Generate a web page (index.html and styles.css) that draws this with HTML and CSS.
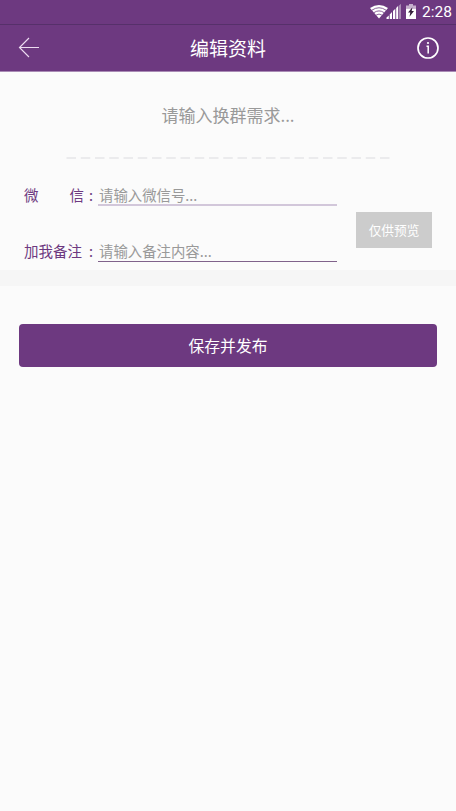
FILE: index.html
```html
<!DOCTYPE html>
<html lang="zh-CN">
<head>
<meta charset="utf-8">
<title>编辑资料</title>
<link rel="stylesheet" href="styles.css">
</head>
<body>
<div class="status">
  <svg class="status-icons" width="48" height="20" viewBox="0 0 48 20">
    <path d="M1 8Q10 2 19 8L10 18.500Z" fill="#fff"/>
    <path d="M2.900 10.200Q10 5.300 17.100 10.200M5 12.600Q10 9.200 15 12.600M7.200 15Q10 13.200 12.800 15" fill="none" stroke="#6d3980" stroke-width=".8"/>
    <path d="M17.500 19v-1.500l2.300-2V19zM20.700 19v-4.600l2.300-2.300V19zM24 19v-7.900l2.300-2.300V19zM27.200 19V7.900l1.800-1.800V19z" fill="#fff"/>
    <path d="M29.500 19V6l2.500-2.200V19z" fill="#a98ab4"/>
    <path d="M40 4h4v1.500h3V8.500h-10V5.500h3z" fill="#c5b0cc"/>
    <path d="M37 8.500h10V19H37z" fill="#fff"/>
    <path d="M43.400 7.200L39 12.600h2.300L40.500 16.800l4.500-5.900h-2.300z" fill="#34203b"/>
  </svg>
  <span class="time">2:28</span>
</div>
<header class="header">
  <svg class="back" width="22" height="22" viewBox="0 0 22 22"><path d="M11 1L1.500 10.500L11 20M1.500 10.500H21" fill="none" stroke="#eddcf1" stroke-width="1.150"/></svg>
  <h1 class="title">编辑资料</h1>
  <svg class="info" width="24" height="24" viewBox="0 0 24 24"><circle cx="12" cy="12" r="10" fill="none" stroke="#fff" stroke-width="1.700"/><circle cx="12" cy="7" r="1.100" fill="#fff"/><path d="M10.500 10.200H12.200V17.500" fill="none" stroke="#fff" stroke-width="1.500"/></svg>
</header>
<main>
  <section class="need">
    <div class="need-text">请输入换群需求...</div>
    <svg class="dashes" width="324" height="2" viewBox="0 0 324 2"><path d="M.5 1H324" stroke="#ebebed" stroke-width="2" stroke-dasharray="9.500 4.750"/></svg>
  </section>
  <section class="contact">
    <div class="fields">
      <div class="row"><span class="label"><span>微</span><span>信</span></span><span class="colon">:</span><span class="field soft">请输入微信号...</span></div>
      <div class="row"><span class="label"><span>加我备注</span></span><span class="colon">:</span><span class="field">请输入备注内容...</span></div>
    </div>
    <div class="preview">仅供预览</div>
  </section>
  <div class="divider"></div>
  <div class="save">保存并发布</div>
</main>
</body>
</html>
```

FILE: styles.css
```css
* { box-sizing: border-box; }
body {
  margin: 0;
  min-height: 811px;
  background: #fbfbfb;
  font-family: "Noto Sans CJK SC", sans-serif;
}
svg { display: block; flex: none; }
.status {
  height: 25px;
  padding-right: 5px;
  display: flex;
  justify-content: flex-end;
  background: #6d3980;
  border-bottom: 1px solid #56306a;
  color: #fff;
}
.status-icons { margin-right: 5px; }
.time {
  width: 29px;
  font: 15.5px/25px Roboto, sans-serif;
  white-space: nowrap;
}
.header {
  height: 47px;
  padding: 0 16px 1px 18px;
  display: flex;
  align-items: center;
  justify-content: space-between;
  background: #6d3980;
  border-bottom: 1px solid #a98bb5;
  color: #fff;
}
.title { margin: 0; font-size: 19px; line-height: 28px; font-weight: 400; }
.need { height: 87px; padding-top: 30px; }
.need-text {
  height: 26px;
  font-size: 17px;
  line-height: 26px;
  text-align: center;
  color: #999;
}
.dashes { margin: 29px 0 0 66px; }
.contact {
  height: 111px;
  display: flex;
  padding: 24px 24px 0;
  justify-content: space-between;
}
.fields { width: 313px; }
.row {
  display: flex;
  height: 23px;
  margin-bottom: 33px;
  font-size: 14.5px;
  line-height: 23px;
}
.label { width: 60px; display: flex; justify-content: space-between; color: #6d3980; white-space: nowrap; }
.colon { width: 14px; padding-left: 5px; color: #6d3980; }
.field { flex: 1; padding-left: 1px; border-bottom: 1px solid #80628b; color: #999; font-size: 14.4px; }
.soft { border-bottom: 2px solid #d2c7da; }
.preview {
  width: 76px;
  height: 36px;
  margin-top: 29px;
  background: #ccc;
  color: #fff;
  font-size: 12.7px;
  line-height: 36px;
  text-align: center;
}
.divider { height: 16px; background: #f6f6f6; }
.save {
  height: 43px;
  margin: 38px 19px 0;
  border-radius: 4px;
  background: #6d3980;
  color: #fff;
  font-size: 15.8px;
  line-height: 43px;
  text-align: center;
}
```
